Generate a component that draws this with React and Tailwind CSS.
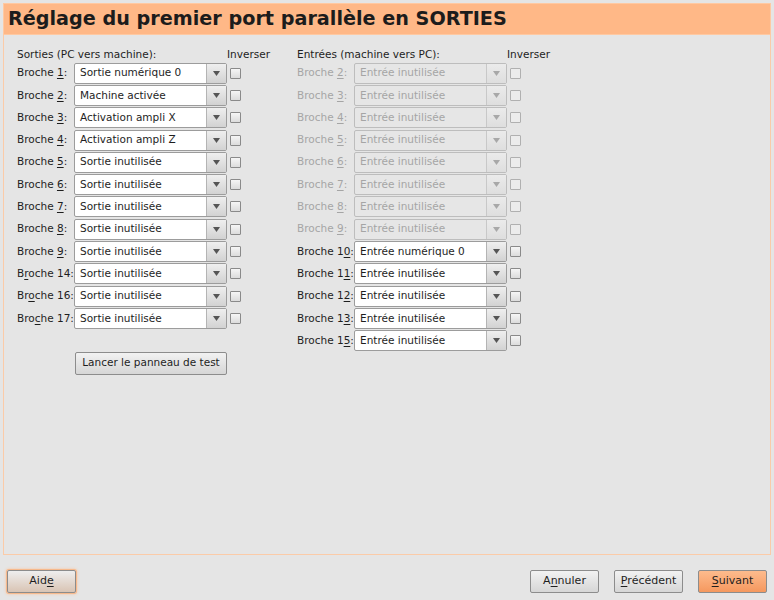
import React from 'react';

const FONT = { fontFamily: '"DejaVu Sans", "Liberation Sans", sans-serif' };

// label is split in three parts so the mnemonic letter can be underlined
const outputs = [
  ['Broche ', '1', ':', 'Sortie numérique 0'],
  ['Broche ', '2', ':', 'Machine activée'],
  ['Broche ', '3', ':', 'Activation ampli X'],
  ['Broche ', '4', ':', 'Activation ampli Z'],
  ['Broche ', '5', ':', 'Sortie inutilisée'],
  ['Broche ', '6', ':', 'Sortie inutilisée'],
  ['Broche ', '7', ':', 'Sortie inutilisée'],
  ['Broche ', '8', ':', 'Sortie inutilisée'],
  ['Broche ', '9', ':', 'Sortie inutilisée'],
  ['B', 'r', 'oche 14:', 'Sortie inutilisée'],
  ['Br', 'o', 'che 16:', 'Sortie inutilisée'],
  ['Bro', 'c', 'he 17:', 'Sortie inutilisée'],
];

const inputs = [
  ['Broche ', '2', ':', 'Entrée inutilisée', true],
  ['Broche ', '3', ':', 'Entrée inutilisée', true],
  ['Broche ', '4', ':', 'Entrée inutilisée', true],
  ['Broche ', '5', ':', 'Entrée inutilisée', true],
  ['Broche ', '6', ':', 'Entrée inutilisée', true],
  ['Broche ', '7', ':', 'Entrée inutilisée', true],
  ['Broche ', '8', ':', 'Entrée inutilisée', true],
  ['Broche ', '9', ':', 'Entrée inutilisée', true],
  ['Broche 1', '0', ':', 'Entrée numérique 0'],
  ['Broche 1', '1', ':', 'Entrée inutilisée'],
  ['Broche 1', '2', ':', 'Entrée inutilisée'],
  ['Broche 1', '3', ':', 'Entrée inutilisée'],
  ['Broche 1', '5', ':', 'Entrée inutilisée'],
];

const Combo = ({ value, disabled }) => (
  <div
    className={`flex h-[21px] w-[153px] rounded-[2px] border ${
      disabled ? 'border-[#bdbdbd] bg-[#e6e6e6] text-[#a5a5a5]' : 'border-[#9c9c9c] bg-white text-[#1e1e1e]'
    }`}
  >
    <div className="flex flex-1 items-center pl-[5px] truncate">{value}</div>
    <div
      className={`flex w-[20px] items-center justify-center border-l ${
        disabled
          ? 'border-[#c8c8c8] bg-gradient-to-b from-[#ebebeb] to-[#dedede] text-[#a8a8a8]'
          : 'border-[#b4b4b4] bg-gradient-to-b from-[#efefef] to-[#d2d2d2] text-[#555]'
      }`}
    >
      <svg width="7" height="5" viewBox="0 0 7 5">
        <path d="M0 0h7L3.5 5z" fill="currentColor" />
      </svg>
    </div>
  </div>
);

const Check = ({ disabled }) => (
  <div
    className={`ml-[3px] h-[11px] w-[11px] rounded-[1px] border ${
      disabled ? 'border-[#b0b0b0] bg-[#ececec]' : 'border-[#8a8a8a] bg-gradient-to-b from-[#f6f6f6] to-[#dcdcdc]'
    }`}
  />
);

const Row = ({ row }) => {
  const [pre, u, post, value, disabled] = row;
  return (
    <div className="flex h-[22.3px] items-center">
      <div className={`w-[57px] whitespace-nowrap ${disabled ? 'text-[#a5a5a5]' : 'text-[#1e1e1e]'}`}>
        {pre}
        <span className="underline underline-offset-2">{u}</span>
        {post}
      </div>
      <Combo value={value} disabled={disabled} />
      <Check disabled={disabled} />
    </div>
  );
};

const Button = ({ children, className = '' }) => (
  <button
    className={`flex h-[23px] items-center justify-center rounded-[2px] border border-[#8c8c8c] text-[#1e1e1e] ${className}`}
  >
    {children}
  </button>
);

export default function App() {
  return (
    <div className="flex h-[600px] w-[774px] flex-col bg-[#e5e5e5] pl-[3px] pr-[3px] pt-[3px] text-[10.5px]" style={FONT}>
      {/* Title bar */}
      <div className="flex h-[32px] w-[768px] items-center border border-[#ffc9a2] bg-[#ffb887] pl-[4px]">
        <h1 className="text-[19.2px] font-bold text-[#1c1c1c]">Réglage du premier port parallèle en SORTIES</h1>
      </div>

      {/* Main panel */}
      <div className="flex h-[520px] w-[768px] border border-t-0 border-[#fbcba8] pl-[13px] pt-[13px]">
        <div className="flex w-[280px] flex-col">
          <div className="flex h-[14px] items-center text-[#1e1e1e]">
            <span className="w-[210px]">Sorties (PC vers machine):</span>
            <span>Inverser</span>
          </div>
          {outputs.map((r, i) => (
            <Row key={i} row={r} />
          ))}
          <div className="mt-[22px] pl-[58px]">
            <Button className="w-[152px] bg-gradient-to-b from-[#f2f2f2] to-[#d6d6d6]">Lancer le panneau de test</Button>
          </div>
        </div>
        <div className="flex w-[280px] flex-col">
          <div className="flex h-[14px] items-center text-[#1e1e1e]">
            <span className="w-[210px]">Entrées (machine vers PC):</span>
            <span>Inverser</span>
          </div>
          {inputs.map((r, i) => (
            <Row key={i} row={r} />
          ))}
        </div>
      </div>

      {/* Footer */}
      <div className="flex flex-1 items-start pt-[15px] pl-[4px] pr-[4px] text-[11px]">
        <Button className="w-[69px] bg-gradient-to-b from-[#eeeeee] to-[#d9c4b4] shadow-[0_0_0_1px_#f7b98c,0_0_3px_1px_#f9c49d]">
          Aid<span className="underline underline-offset-2">e</span>
        </Button>
        <div className="ml-auto flex gap-[15px]">
          <Button className="w-[69px] bg-gradient-to-b from-[#f2f2f2] to-[#d6d6d6]">
            A<span className="underline underline-offset-2">n</span>nuler
          </Button>
          <Button className="w-[69px] bg-gradient-to-b from-[#f2f2f2] to-[#d6d6d6]">
            <span className="underline underline-offset-2">P</span>récédent
          </Button>
          <Button className="w-[69px] bg-gradient-to-b from-[#fdbb8d] to-[#f5985e]">
            <span className="underline underline-offset-2">S</span>uivant
          </Button>
        </div>
      </div>
    </div>
  );
}
